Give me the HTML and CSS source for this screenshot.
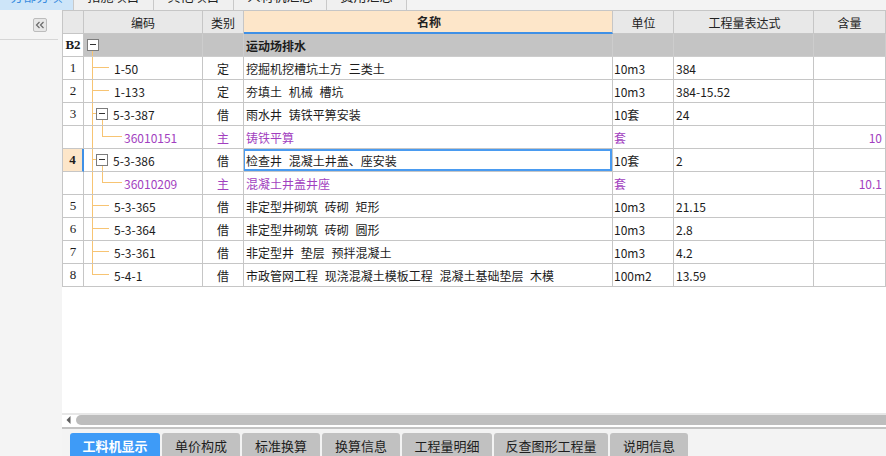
FILE: index.html
```html
<!DOCTYPE html>
<html lang="zh-CN">
<head>
<meta charset="utf-8">
<title>分部分项</title>
<link rel="stylesheet" href="styles.css">
</head>
<body>
<div class="app">
  <div class="toptabs">
    <div class="ttab tt1 active"><span>分部分项</span></div>
    <div class="ttab tt2"><span>措施项目</span></div>
    <div class="ttab tt3"><span>其他项目</span></div>
    <div class="ttab tt4"><span>人材机汇总</span></div>
    <div class="ttab tt5"><span>费用汇总</span></div>
  </div>
  <div class="main">
    <aside class="sidebar">
      <div class="side-top">
        <div class="collapse-btn">
          <svg width="12" height="12" viewBox="0 0 12 12"><polyline points="5.5,3 2.5,6 5.5,9" fill="none" stroke="#6a6a6a" stroke-width="1.2"/><polyline points="9.5,3 6.5,6 9.5,9" fill="none" stroke="#6a6a6a" stroke-width="1.2"/></svg>
        </div>
      </div>
      <div class="side-line"></div>
    </aside>
    <section class="content">
      <div class="grid">
        <div class="row head">
          <div class="c num"></div>
          <div class="c code ctr">编码</div>
          <div class="c type ctr">类别</div>
          <div class="c name ctr hname">名称</div>
          <div class="c unit ctr">单位</div>
          <div class="c expr ctr">工程量表达式</div>
          <div class="c qty ctr">含量</div>
        </div>
        <div class="row group">
          <div class="c num bnum">B2</div>
          <div class="c code"><i class="box b-root"></i><i class="vl v-root"></i></div>
          <div class="c type"></div>
          <div class="c name bold">运动场排水</div>
          <div class="c unit"></div>
          <div class="c expr"></div>
          <div class="c qty"></div>
        </div>
        <div class="row">
          <div class="c num ctr">1</div>
          <div class="c code leaf"><i class="vl v-full"></i><i class="hl h-leaf"></i>1-50</div>
          <div class="c type ctr">定</div>
          <div class="c name">挖掘机挖槽坑土方 三类土</div>
          <div class="c unit">10m3</div>
          <div class="c expr">384</div>
          <div class="c qty"></div>
        </div>
        <div class="row">
          <div class="c num ctr">2</div>
          <div class="c code leaf"><i class="vl v-full"></i><i class="hl h-leaf"></i>1-133</div>
          <div class="c type ctr">定</div>
          <div class="c name">夯填土 机械 槽坑</div>
          <div class="c unit">10m3</div>
          <div class="c expr">384-15.52</div>
          <div class="c qty"></div>
        </div>
        <div class="row">
          <div class="c num ctr">3</div>
          <div class="c code parent"><i class="vl v-full"></i><i class="hl h-stub"></i><i class="box b-node"></i><i class="vl v-node"></i>5-3-387</div>
          <div class="c type ctr">借</div>
          <div class="c name">雨水井 铸铁平箅安装</div>
          <div class="c unit">10套</div>
          <div class="c expr">24</div>
          <div class="c qty"></div>
        </div>
        <div class="row sub">
          <div class="c num"></div>
          <div class="c code child"><i class="vl v-full"></i><i class="vl v-child"></i><i class="hl h-child"></i>36010151</div>
          <div class="c type ctr">主</div>
          <div class="c name">铸铁平算</div>
          <div class="c unit">套</div>
          <div class="c expr"></div>
          <div class="c qty rt">10</div>
        </div>
        <div class="row">
          <div class="c num ctr cur">4</div>
          <div class="c code parent"><i class="vl v-full"></i><i class="hl h-stub"></i><i class="box b-node"></i><i class="vl v-node"></i>5-3-386</div>
          <div class="c type ctr">借</div>
          <div class="c name sel">检查井 混凝土井盖、座安装</div>
          <div class="c unit">10套</div>
          <div class="c expr">2</div>
          <div class="c qty"></div>
        </div>
        <div class="row sub">
          <div class="c num"></div>
          <div class="c code child"><i class="vl v-full"></i><i class="vl v-child"></i><i class="hl h-child"></i>36010209</div>
          <div class="c type ctr">主</div>
          <div class="c name">混凝土井盖井座</div>
          <div class="c unit">套</div>
          <div class="c expr"></div>
          <div class="c qty rt">10.1</div>
        </div>
        <div class="row">
          <div class="c num ctr">5</div>
          <div class="c code leaf"><i class="vl v-full"></i><i class="hl h-leaf"></i>5-3-365</div>
          <div class="c type ctr">借</div>
          <div class="c name">非定型井砌筑 砖砌 矩形</div>
          <div class="c unit">10m3</div>
          <div class="c expr">21.15</div>
          <div class="c qty"></div>
        </div>
        <div class="row">
          <div class="c num ctr">6</div>
          <div class="c code leaf"><i class="vl v-full"></i><i class="hl h-leaf"></i>5-3-364</div>
          <div class="c type ctr">借</div>
          <div class="c name">非定型井砌筑 砖砌 圆形</div>
          <div class="c unit">10m3</div>
          <div class="c expr">2.8</div>
          <div class="c qty"></div>
        </div>
        <div class="row">
          <div class="c num ctr">7</div>
          <div class="c code leaf"><i class="vl v-full"></i><i class="hl h-leaf"></i>5-3-361</div>
          <div class="c type ctr">借</div>
          <div class="c name">非定型井 垫层 预拌混凝土</div>
          <div class="c unit">10m3</div>
          <div class="c expr">4.2</div>
          <div class="c qty"></div>
        </div>
        <div class="row">
          <div class="c num ctr">8</div>
          <div class="c code leaf"><i class="vl v-last"></i><i class="hl h-leaf"></i>5-4-1</div>
          <div class="c type ctr">借</div>
          <div class="c name">市政管网工程 现浇混凝土模板工程 混凝土基础垫层 木模</div>
          <div class="c unit">100m2</div>
          <div class="c expr">13.59</div>
          <div class="c qty"></div>
        </div>
      </div>
      <div class="blank"></div>
      <div class="hscroll">
        <div class="sarrow"><svg width="5" height="8" viewBox="0 0 5 8"><polygon points="4.5,0 0.5,4 4.5,8" fill="#5e5e5e"/></svg></div>
        <div class="thumb"></div>
      </div>
      <div class="btabs">
        <div class="btab bt-a active">工料机显示</div>
        <div class="btab bt-b">单价构成</div>
        <div class="btab bt-b">标准换算</div>
        <div class="btab bt-b">换算信息</div>
        <div class="btab bt-a">工程量明细</div>
        <div class="btab bt-c">反查图形工程量</div>
        <div class="btab bt-b">说明信息</div>
      </div>
    </section>
  </div>
</div>
</body>
</html>
```
FILE: styles.css
```css
* { box-sizing: border-box; }
html, body { margin: 0; padding: 0; }
body {
  width: 886px;
  height: 456px;
  overflow: hidden;
  background: #f3f3f3;
  font-family: "Noto Sans CJK SC", "Noto Sans", sans-serif;
  font-size: 12px;
  color: #1c1c1c;
}
.app { display: flex; flex-direction: column; height: 456px; }

/* top tabs (cut off at the window edge) */
.toptabs {
  display: flex;
  height: 10px;
  overflow: hidden;
  background: #f3f3f3;
  flex: none;
}
.ttab {
  height: 10px;
  background: #f0f0f0;
  border-right: 1px solid #c9c9c9;
  text-align: center;
  overflow: hidden;
  color: #222;
  font-size: 13px;
}
.ttab span { display: block; line-height: 16px; margin-top: -12px; }
.ttab.active { background: #cde5f9; color: #3b8de0; }
.tt1 { width: 74px; }
.tt2 { width: 80px; }
.tt3 { width: 80px; }
.tt4 { width: 93px; }
.tt5 { width: 80px; }

.main { display: flex; flex: 1; min-height: 0; }

/* sidebar */
.sidebar { width: 62px; flex: none; background: #f4f4f4; }
.side-top { height: 29px; padding: 8px 0 0 33px; }
.collapse-btn {
  width: 14px; height: 14px;
  border: 1px solid #bcbcbc;
  border-radius: 2px;
  background: #e7e7e7;
  display: flex; align-items: center; justify-content: center;
}
.side-line { height: 1px; width: 58px; background: #d6d6d6; }

/* content */
.content { flex: 1; display: flex; flex-direction: column; background: #fff; min-width: 0; }
.grid { border-left: 1px solid #c6c6c6; border-top: 1px solid #c6c6c6; flex: none; }
.row {
  display: grid;
  grid-template-columns: 21px 119px 41px 369px 61px 140px 72px;
  height: 23px;
}
.c {
  border-right: 1px solid #c6c6c6;
  border-bottom: 1px solid #c6c6c6;
  display: flex;
  align-items: center;
  white-space: nowrap;
  overflow: hidden;
  position: relative;
}
.ctr { justify-content: center; }
.rt { justify-content: flex-end; padding-right: 3px; }
.head .c { background: #e8e8e8; color: #222; }
.head .hname { background: #fde6c9; font-weight: bold; border-bottom: 2px solid #3f90e6; }
.group .c { background: #c4c4c4; border-color: #cdcdcd; }
.group .num { background: #fff; border-color: #c6c6c6; }
.bnum { justify-content: center; font-family: "Liberation Serif", serif; font-weight: bold; font-size: 13px; }
.bold { font-weight: bold; }
.num { font-family: "Liberation Serif", "Noto Sans CJK SC", serif; font-size: 13px; }
.num.cur { background: #fde6c9; font-weight: bold; border-right: 2px solid #3f90e6; }
.name { padding-left: 2px; word-spacing: 4px; }
.unit { padding-left: 1px; }
.expr { padding-left: 2px; }
.sub .c:not(.num) { color: #a23fc0; }
.sel::after {
  content: "";
  position: absolute;
  top: 0; bottom: 0; left: -1px; right: 0;
  border: 2px solid #4a9bf0;
}

/* tree */
.code.leaf { padding-left: 30px; }
.code.parent { padding-left: 29px; }
.code.child { padding-left: 40px; }
.code i { position: absolute; display: block; }
.vl { width: 1px; background: #f7c473; }
.hl { height: 1px; background: #f7c473; top: 10px; }
.v-full { left: 8px; top: 0; height: 23px; }
.v-last { left: 8px; top: 0; height: 11px; }
.v-root { left: 8px; top: 17px; height: 6px; }
.v-node { left: 18px; top: 17px; height: 6px; }
.v-child { left: 18px; top: 0; height: 11px; }
.h-leaf { left: 8px; width: 17px; }
.h-stub { left: 8px; width: 4px; }
.h-child { left: 18px; width: 20px; }
.box {
  width: 12px; height: 12px;
  border: 1px solid #7c7c7c;
  background: #fff;
  top: 5px;
}
.box::after {
  content: "";
  position: absolute;
  left: 2px; top: 4px;
  width: 6px; height: 1px;
  background: #333;
}
.b-root { left: 3px; }
.b-node { left: 12px; }

.blank { height: 126px; flex: none; background: #fff; }

/* horizontal scrollbar */
.hscroll {
  height: 16px;
  flex: none;
  display: flex;
  border-top: 2px solid #e7e7e7;
  border-bottom: 2px solid #c3c3c3;
  padding-bottom: 2px;
  background: #fff;
}
.sarrow { width: 14px; display: flex; align-items: center; padding-left: 4px; background: #fff; }
.thumb { flex: 1; background: #bdbdbd; border-radius: 5px 0 0 5px; }

/* bottom tabs */
.btabs {
  flex: 1;
  background: #f3f3f3;
  display: flex;
  gap: 2px;
  padding: 4px 0 0 8px;
  overflow: hidden;
}
.btab {
  height: 30px;
  background: #c1c1c1;
  border-radius: 3px 3px 0 0;
  text-align: center;
  line-height: 16px;
  padding-top: 5px;
  color: #1e1e1e;
  font-size: 13px;
}
.btab.active { background: #3e9bf7; color: #fff; font-weight: bold; }
.bt-a { width: 90px; }
.bt-b { width: 78px; }
.bt-c { width: 114px; }
```
